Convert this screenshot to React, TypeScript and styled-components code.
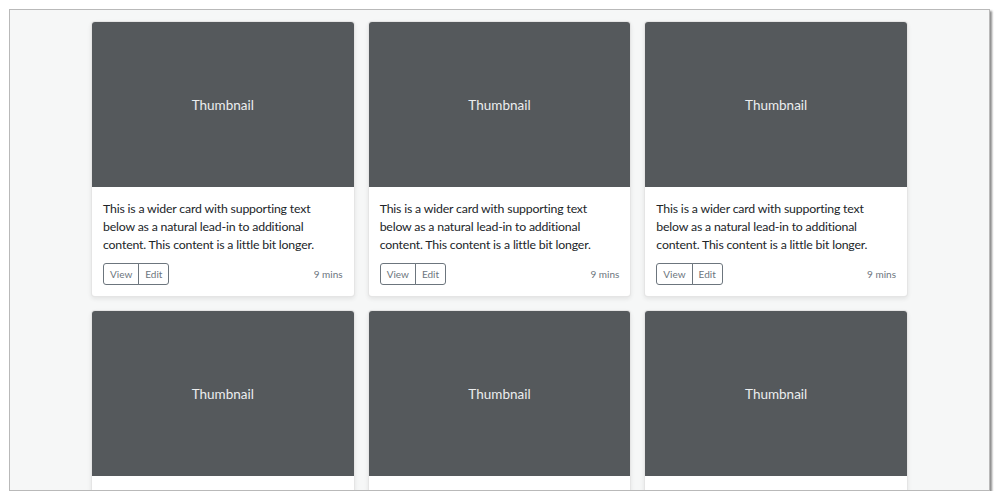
import React from 'react';
import styled, { createGlobalStyle } from 'styled-components';

const cards = [1, 2, 3, 4, 5, 6].map(id => ({
  id,
  text: 'This is a wider card with supporting text below as a natural lead-in to additional content. This content is a little bit longer.',
  time: '9 mins'
}));

const GlobalStyle = createGlobalStyle`
  body {
    margin: 0;
    background: #ffffff;
    font-family: Lato, "Noto Sans", sans-serif;
  }
`;

const Frame = styled.div`
  margin: 9px 10px 0 9px;
  height: 480px;
  border: 1px solid #b9b9b9;
  box-shadow: 2px 2px 2px rgba(0, 0, 0, 0.45);
  background: #f6f7f7;
  overflow: hidden;
`;

const Grid = styled.div`
  width: 817px;
  margin: 0 auto;
  padding-top: 11px;
  display: grid;
  grid-template-columns: repeat(3, 1fr);
  gap: 13px;
`;

const Card = styled.div`
  background: #fff;
  border: 1px solid rgba(0, 0, 0, 0.1);
  border-radius: 4px;
  box-shadow: 0 2px 4px rgba(0, 0, 0, 0.08);
  overflow: hidden;
`;

const Thumb = styled.div`
  height: 165px;
  background: #55595c;
  color: #eceeef;
  font-size: 13.5px;
  display: flex;
  align-items: center;
  justify-content: center;
`;

const Body = styled.div`
  padding: 13px 11px 11px 11px;
`;

const Text = styled.p`
  margin: 0 0 9px;
  font-size: 12.3px;
  letter-spacing: -0.18px;
  line-height: 18px;
  color: #212529;
`;

const Footer = styled.div`
  display: flex;
  justify-content: space-between;
  align-items: center;
`;

const Group = styled.div`
  display: inline-flex;
`;

const Btn = styled.button<{ $first?: boolean }>`
  height: 22px;
  padding: 0 6px;
  font-family: inherit;
  font-size: 10px;
  color: #6c757d;
  background: transparent;
  border: 1px solid #6c757d;
  border-radius: ${p => (p.$first ? '3px 0 0 3px' : '0 3px 3px 0')};
  margin-left: ${p => (p.$first ? '0' : '-1px')};
`;

const Time = styled.small`
  font-size: 10px;
  color: #6c757d;
`;

export default function App() {
  return (
    <>
      <GlobalStyle />
      <Frame>
        <Grid>
          {cards.map(card => (
            <Card key={card.id}>
              <Thumb>Thumbnail</Thumb>
              <Body>
                <Text>{card.text}</Text>
                <Footer>
                  <Group>
                    <Btn $first>View</Btn>
                    <Btn>Edit</Btn>
                  </Group>
                  <Time>{card.time}</Time>
                </Footer>
              </Body>
            </Card>
          ))}
        </Grid>
      </Frame>
    </>
  );
}
